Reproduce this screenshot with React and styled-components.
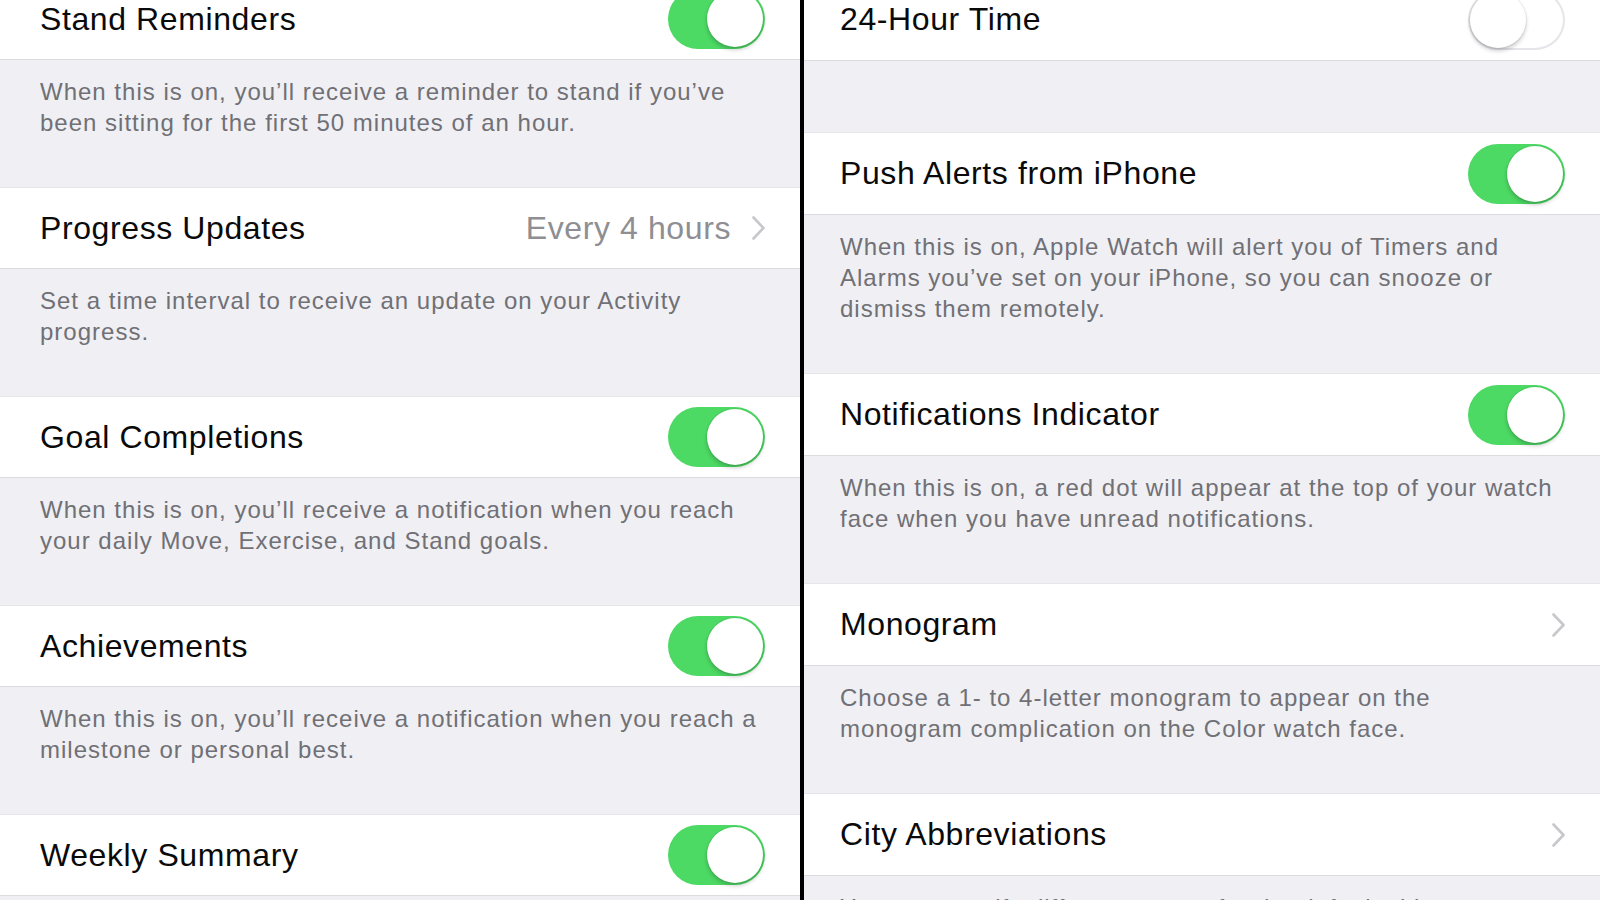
import React from 'react';
import styled, { createGlobalStyle } from 'styled-components';

// global page styles
const GlobalStyle = createGlobalStyle`
  html, body {
    margin: 0;
    padding: 0;
    background: #efeff4;
  }
  body {
    font-family: 'Liberation Sans', Arial, sans-serif;
    -webkit-font-smoothing: antialiased;
  }
`;

// layout
const Screen = styled.div`
  display: flex;
  width: 100%;
  height: 100vh;
  overflow: hidden;
  background: #efeff4;
`;

const Panel = styled.section`
  flex: ${props => (props.$width ? `0 0 ${props.$width}px` : '1')};
  overflow: hidden;
  background: #efeff4;
`;

const Divider = styled.div`
  flex: 0 0 4px;
  background: #000;
`;

// scrolled list: the first cell is partly above the fold
const List = styled.div`
  display: flex;
  flex-direction: column;
  margin-top: ${props => -props.$scroll}px;
`;

// cells
const Row = styled.div`
  box-sizing: border-box;
  height: ${props => props.$height}px;
  display: flex;
  align-items: center;
  justify-content: space-between;
  padding: 0 35px 0 ${props => props.$inset}px;
  background: #fff;
  border-top: 1px solid #e6e6ea;
  border-bottom: 1px solid #dcdce0;
`;

const Label = styled.span`
  font-size: 32px;
  letter-spacing: 0.6px;
  color: #0a0a0a;
  white-space: nowrap;
`;

const Accessory = styled.div`
  display: flex;
  align-items: center;
  gap: 21px;
`;

const Value = styled.span`
  font-size: 32px;
  letter-spacing: 0.6px;
  color: #8e8e93;
  white-space: nowrap;
`;

const Footer = styled.div`
  box-sizing: border-box;
  padding: 16px 30px 49px ${props => props.$inset}px;
  font-size: 24px;
  line-height: 31px;
  letter-spacing: 1px;
  color: #707075;
`;

const FooterLine = styled.div`
  white-space: nowrap;
`;

const Gap = styled.div`
  height: ${props => props.$height}px;
`;

// switch
const Switch = styled.div`
  box-sizing: border-box;
  width: 97px;
  height: 60px;
  padding: 2px;
  border-radius: 30px;
  display: flex;
  justify-content: ${props => (props.$on ? 'flex-end' : 'flex-start')};
  align-items: center;
  background: ${props => (props.$on ? '#4cd964' : '#fff')};
  box-shadow: ${props => (props.$on ? 'none' : 'inset 0 0 0 2px #e5e5ea')};
`;

const Knob = styled.div`
  width: 56px;
  height: 56px;
  border-radius: 50%;
  background: #fff;
  box-shadow: 0 3px 4px rgba(0, 0, 0, 0.2), 0 0 0 1px rgba(0, 0, 0, 0.05);
`;

const Chevron = () => (
  <svg width="13" height="24" viewBox="0 0 13 24" fill="none">
    <polyline points="1.5,1.5 11.5,12 1.5,22.5" stroke="#c7c7cc" strokeWidth="2.6" strokeLinecap="round" strokeLinejoin="round" />
  </svg>
);

const Cell = ({ label, inset, height, on, value, chevron }) => (
  <Row $inset={inset} $height={height}>
    <Label>{label}</Label>
    {on !== undefined && (
      <Switch $on={on}>
        <Knob />
      </Switch>
    )}
    {chevron && (
      <Accessory>
        {value && <Value>{value}</Value>}
        <Chevron />
      </Accessory>
    )}
  </Row>
);

const Note = ({ inset, lines }) => (
  <Footer $inset={inset}>
    {lines.map(line => <FooterLine key={line}>{line}</FooterLine>)}
  </Footer>
);

const activitySettings = [
  {
    label: 'Stand Reminders',
    on: true,
    lines: [
      'When this is on, you\u2019ll receive a reminder to stand if you\u2019ve',
      'been sitting for the first 50 minutes of an hour.',
    ],
  },
  {
    label: 'Progress Updates',
    value: 'Every 4 hours',
    chevron: true,
    lines: [
      'Set a time interval to receive an update on your Activity',
      'progress.',
    ],
  },
  {
    label: 'Goal Completions',
    on: true,
    lines: [
      'When this is on, you\u2019ll receive a notification when you reach',
      'your daily Move, Exercise, and Stand goals.',
    ],
  },
  {
    label: 'Achievements',
    on: true,
    lines: [
      'When this is on, you\u2019ll receive a notification when you reach a',
      'milestone or personal best.',
    ],
  },
  { label: 'Weekly Summary', on: true, lines: [] },
];

const clockSettings = [
  { label: '24-Hour Time', on: false, gap: 71 },
  {
    label: 'Push Alerts from iPhone',
    on: true,
    lines: [
      'When this is on, Apple Watch will alert you of Timers and',
      'Alarms you\u2019ve set on your iPhone, so you can snooze or',
      'dismiss them remotely.',
    ],
  },
  {
    label: 'Notifications Indicator',
    on: true,
    lines: [
      'When this is on, a red dot will appear at the top of your watch',
      'face when you have unread notifications.',
    ],
  },
  {
    label: 'Monogram',
    chevron: true,
    lines: [
      'Choose a 1- to 4-letter monogram to appear on the',
      'monogram complication on the Color watch face.',
    ],
  },
  {
    label: 'City Abbreviations',
    chevron: true,
    lines: ['You can specify different names for the default cities'],
  },
];

const SettingsList = ({ items, inset, scroll, rowHeight }) => (
  <List $scroll={scroll}>
    {items.map(item => (
      <React.Fragment key={item.label}>
        <Cell
          label={item.label}
          inset={inset}
          height={rowHeight}
          on={item.on}
          value={item.value}
          chevron={item.chevron} />
        {item.gap && <Gap $height={item.gap} />}
        {item.lines && item.lines.length > 0 && <Note inset={inset} lines={item.lines} />}
      </React.Fragment>
    ))}
  </List>
);

const App = () => (
  <>
    <GlobalStyle />
    <Screen>
      <Panel $width={800}>
        <SettingsList items={activitySettings} inset={40} scroll={22} rowHeight={82} />
      </Panel>
      <Divider />
      <Panel>
        <SettingsList items={clockSettings} inset={36} scroll={22} rowHeight={83} />
      </Panel>
    </Screen>
  </>
);

export default App;
